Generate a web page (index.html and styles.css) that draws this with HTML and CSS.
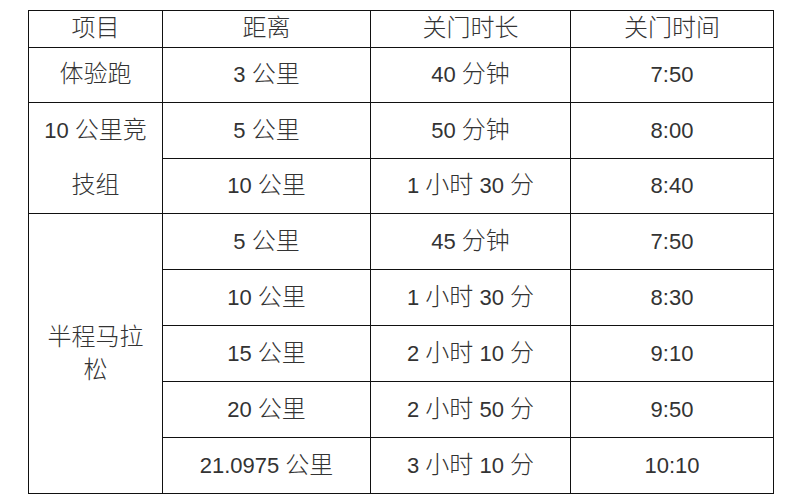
FILE: index.html
```html
<!DOCTYPE html>
<html lang="zh-CN">
<head>
<meta charset="utf-8">
<title>关门时间</title>
<link rel="stylesheet" href="styles.css">
</head>
<body>
<table class="cutoff">
  <colgroup>
    <col class="c1"><col class="c2"><col class="c3"><col class="c4">
  </colgroup>
  <thead>
    <tr class="head">
      <th><span class="zh">项目</span></th>
      <th><span class="zh">距离</span></th>
      <th><span class="zh">关门时长</span></th>
      <th><span class="zh">关门时间</span></th>
    </tr>
  </thead>
  <tbody>
    <tr class="r55">
      <td><span class="zh">体验跑</span></td>
      <td>3 <span class="zh">公里</span></td>
      <td>40 <span class="zh">分钟</span></td>
      <td>7:50</td>
    </tr>
    <tr class="r56">
      <td rowspan="2" class="group tall">10 <span class="zh">公里竞</span><br><span class="zh">技组</span></td>
      <td>5 <span class="zh">公里</span></td>
      <td>50 <span class="zh">分钟</span></td>
      <td>8:00</td>
    </tr>
    <tr class="r55">
      <td>10 <span class="zh">公里</span></td>
      <td>1 <span class="zh">小时</span> 30 <span class="zh">分</span></td>
      <td>8:40</td>
    </tr>
    <tr class="r56">
      <td rowspan="6" class="group short"><span class="zh">半程马拉</span><br><span class="zh">松</span></td>
      <td>5 <span class="zh">公里</span></td>
      <td>45 <span class="zh">分钟</span></td>
      <td>7:50</td>
    </tr>
    <tr class="r56">
      <td>10 <span class="zh">公里</span></td>
      <td>1 <span class="zh">小时</span> 30 <span class="zh">分</span></td>
      <td>8:30</td>
    </tr>
    <tr class="r56">
      <td>15 <span class="zh">公里</span></td>
      <td>2 <span class="zh">小时</span> 10 <span class="zh">分</span></td>
      <td>9:10</td>
    </tr>
    <tr class="r56">
      <td>20 <span class="zh">公里</span></td>
      <td>2 <span class="zh">小时</span> 50 <span class="zh">分</span></td>
      <td>9:50</td>
    </tr>
    <tr class="r56">
      <td>21.0975 <span class="zh">公里</span></td>
      <td>3 <span class="zh">小时</span> 10 <span class="zh">分</span></td>
      <td>10:10</td>
    </tr>
  </tbody>
</table>
</body>
</html>
```
FILE: styles.css
```css
html, body {
  margin: 0;
  padding: 0;
  background: #ffffff;
}

body {
  font-family: "Liberation Sans", Arial, "Noto Sans CJK SC", sans-serif;
  font-size: 22px;
  color: #333333;
}

.cutoff {
  margin: 10px 0 0 28px;
  width: 745px;
  border-collapse: collapse;
  table-layout: fixed;
}

.c1 { width: 134px; }
.c2 { width: 208px; }
.c3 { width: 200px; }
.c4 { width: 203px; }

.cutoff th,
.cutoff td {
  border: 1px solid #111111;
  padding: 0;
  text-align: center;
  vertical-align: middle;
  font-weight: normal;
  line-height: 30px;
  white-space: nowrap;
}

.zh {
  font-family: "Noto Sans CJK SC", sans-serif;
  font-size: 24px;
  font-weight: 300;
  line-height: 24px;
}

.head { height: 37px; }
.r55 { height: 55px; }
.r56 { height: 56px; }

.cutoff td.group.tall { line-height: 55px; }
.cutoff td.group.short { line-height: 33px; }
```
